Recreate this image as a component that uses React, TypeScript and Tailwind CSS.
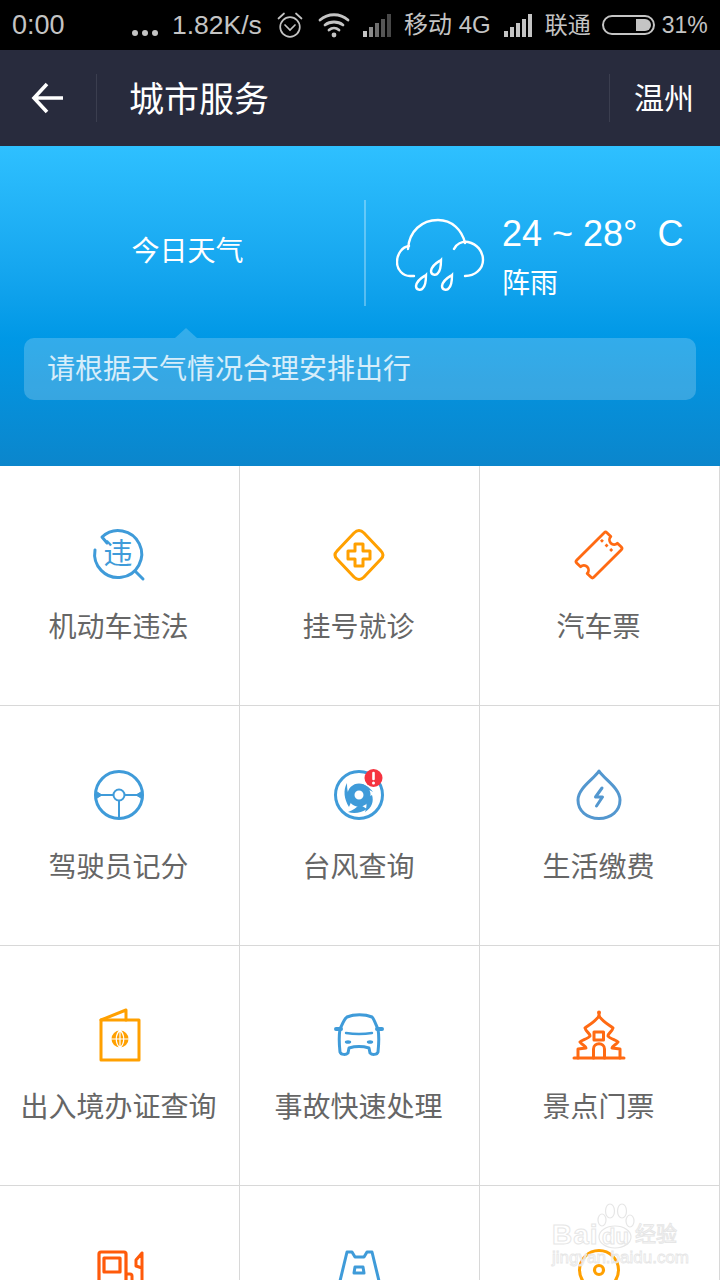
import type { ReactNode } from 'react'

const BLUE = '#3f9bd9'
const AMBER = '#ffa000'
const ORANGE = '#ff6a13'

function IconBox({ children, color }: { children: ReactNode; color: string }) {
  return (
    <svg viewBox="0 0 60 60" className="w-[60px] h-[60px] overflow-visible" fill="none" stroke={color} strokeWidth="3" strokeLinecap="round" strokeLinejoin="round">
      {children}
    </svg>
  )
}

const ViolationIcon = () => (
  <IconBox color={BLUE}>
    <path d="M6 25 A23.5 23.5 0 1 0 13 12 L18 18" />
    <path d="M47 47 L54 54" />
    <text x="29" y="39" textAnchor="middle" fontSize="29" fill={BLUE} stroke="none" fontFamily="'Noto Sans CJK SC', sans-serif">违</text>
  </IconBox>
)

const HospitalIcon = () => (
  <IconBox color={AMBER}>
    <path d="M25 8 Q30 3 35 8 L52 26 Q56 30 52 34 L35 52 Q30 57 25 52 L8 34 Q4 30 8 26 Z" />
    <path d="M26 19 H34 V26 H41 V34 H34 V41 H26 V34 H19 V26 H26 Z" />
  </IconBox>
)

const TicketIcon = () => (
  <IconBox color={ORANGE}>
    <g transform="translate(30 30) rotate(-45) scale(0.93)">
      <path d="M-21 -13 H21 a2 2 0 0 1 2 2 V-5 a5 5 0 0 0 0 10 V11 a2 2 0 0 1 -2 2 H-21 a2 2 0 0 1 -2 -2 V5 a5 5 0 0 0 0 -10 V-11 a2 2 0 0 1 2 -2 Z" />
      <path d="M13 -10 V11" strokeDasharray="3 4" strokeLinecap="butt" />
    </g>
  </IconBox>
)

const WheelIcon = () => (
  <IconBox color={BLUE}>
    <circle cx="30" cy="30" r="23.5" />
    <circle cx="30" cy="30" r="5.5" strokeWidth="2" />
    <path d="M24 30 H7 M36 30 H53 M30 36 V53" strokeWidth="2" />
    <path d="M6.5 26 L13 30 L6.5 34 Z M53.5 26 L47 30 L53.5 34 Z" fill={BLUE} strokeWidth="1" />
  </IconBox>
)

const TyphoonIcon = () => (
  <IconBox color={BLUE}>
    <circle cx="30" cy="30" r="23.5" />
    <circle cx="30" cy="30" r="8" strokeWidth="7" />
    <g fill={BLUE} stroke="none">
      <path d="M20 26 C25 17 36 16 44 27 C38 23 30 22 26 26 Z" />
      <path d="M43 30 C45 36 43 43 36 47 C38 42 38 38 36 34 Z" />
      <path d="M38 44 C32 48 25 49 19 47 C24 45 28 43 30 39 Z" />
      <path d="M20 42 C15 34 14 25 18 18 C18 25 19 30 23 35 Z" />
    </g>
    <circle cx="44.5" cy="13" r="9" fill="#f5333f" stroke="none" />
    <path d="M44.5 8 V14" stroke="#fff" strokeWidth="2.6" />
    <circle cx="44.5" cy="18" r="1.5" fill="#fff" stroke="none" />
  </IconBox>
)

const DropIcon = () => (
  <IconBox color="#5397cf">
    <path d="M30 6 C25 14 9 23 9 35 C9 46 18 53.5 30 53.5 C42 53.5 51 46 51 35 C51 23 35 14 30 6 Z" />
    <path d="M33 23 L26.5 32 H33.5 L27.5 41" />
  </IconBox>
)

const PassportIcon = () => (
  <IconBox color={AMBER}>
    <path d="M12 15 H50 V55 H12 Z" />
    <path d="M12 15 L37 5 V15" />
    <circle cx="31" cy="34" r="8.5" fill={AMBER} stroke="none" />
    <path d="M22 34 H40 M31 25 V43 M31 25 C26 30 26 38 31 43 M31 25 C36 30 36 38 31 43" stroke="#fff" strokeWidth="1.2" />
  </IconBox>
)

const CarIcon = () => (
  <IconBox color={BLUE}>
    <path d="M18 12 C25 9 36 9 43 12 C45 14 47 20 49 24 C50 30 50 38 49 47 C48 50 43 50 41 48 L40 43 C33 41 27 41 20 43 L19 48 C17 50 12 50 11 47 C10 38 10 30 11 24 C13 20 15 14 18 12 Z" />
    <path d="M7 24 H12 M48 24 H53" strokeWidth="4" />
    <path d="M17 28 C24 29 36 29 43 28" strokeWidth="2.4" />
    <ellipse cx="19" cy="37" rx="3.2" ry="1.8" fill={BLUE} stroke="none" />
    <ellipse cx="41" cy="37" rx="3.2" ry="1.8" fill={BLUE} stroke="none" />
  </IconBox>
)

const PagodaIcon = () => (
  <IconBox color={ORANGE}>
    <circle cx="30" cy="7.5" r="2" fill={ORANGE} stroke="none" />
    <path d="M30 9 V11 C26 17 20 20 16 23 C17 27 21 28 21 31 C19 34 12 35 11 37 C13 40 17 41 17 43 L9 44 V53" />
    <path d="M30 11 C34 17 40 20 44 23 C43 27 39 28 39 31 C41 34 48 35 49 37 C47 40 43 41 43 43 L51 44 V53" />
    <path d="M25 27 H34.5 V35 H25 Z" />
    <path d="M24.5 53 V44 C24.5 37 35.5 37 35.5 44 V53" />
    <path d="M5 53 H55" />
  </IconBox>
)

const PumpIcon = () => (
  <IconBox color="#ff5a0a">
    <path d="M10 60 V9 a2 2 0 0 1 2 -2 H35 a2 2 0 0 1 2 2 V60" strokeWidth="3.2" />
    <path d="M15 13 H31 V27 H15 Z" strokeWidth="3.2" />
    <path d="M38 29 H41 a2 2 0 0 1 2 2 V40 M53 8 V40 M53 8 L47 15 V21 L53 23" />
  </IconBox>
)

const RoadIcon = () => (
  <IconBox color={BLUE}>
    <path d="M11 36 L18 7 H23 L26 12 H35 L38 7 H43 L50 36" />
    <path d="M26 22 H34 L35 28 H25 Z" />
  </IconBox>
)

const DiscIcon = () => (
  <IconBox color={AMBER}>
    <circle cx="30" cy="25" r="19.5" />
    <circle cx="30" cy="25" r="4.5" strokeWidth="3.2" />
  </IconBox>
)

// last row is cut off by the window before its labels start
const services: { label?: string; icon: ReactNode }[] = [
  { label: '机动车违法', icon: <ViolationIcon /> },
  { label: '挂号就诊', icon: <HospitalIcon /> },
  { label: '汽车票', icon: <TicketIcon /> },
  { label: '驾驶员记分', icon: <WheelIcon /> },
  { label: '台风查询', icon: <TyphoonIcon /> },
  { label: '生活缴费', icon: <DropIcon /> },
  { label: '出入境办证查询', icon: <PassportIcon /> },
  { label: '事故快速处理', icon: <CarIcon /> },
  { label: '景点门票', icon: <PagodaIcon /> },
  { icon: <PumpIcon /> },
  { icon: <RoadIcon /> },
  { icon: <DiscIcon /> },
]

function SignalBars({ dim }: { dim?: boolean }) {
  const heights = [6, 10, 14, 18, 23]
  const tones = dim
    ? ['bg-[#c4c4c4]', 'bg-[#8c8c8c]', 'bg-[#6e6e6e]', 'bg-[#565656]', 'bg-[#484848]']
    : ['bg-[#c4c4c4]', 'bg-[#c4c4c4]', 'bg-[#c4c4c4]', 'bg-[#c4c4c4]', 'bg-[#c4c4c4]']
  return (
    <div className="flex items-end gap-[2px] h-[23px]">
      {heights.map((h, i) => (
        <div key={h} className={`w-[4px] ${tones[i]}`} style={{ height: h }} />
      ))}
    </div>
  )
}

function StatusBar() {
  return (
    <div className="h-[50px] bg-black text-[#c4c4c4] flex items-center">
      <span className="ml-[12px] text-[27px] leading-none w-[120px]">0:00</span>
      <div className="flex gap-[4px] mt-[16px]">
        <i className="w-[6px] h-[6px] rounded-full bg-[#c4c4c4]" />
        <i className="w-[6px] h-[6px] rounded-full bg-[#c4c4c4]" />
        <i className="w-[6px] h-[6px] rounded-full bg-[#c4c4c4]" />
      </div>
      <span className="ml-[14px] w-[91px] text-[26.5px] leading-none whitespace-nowrap">1.82K/s</span>
      <svg viewBox="0 0 26 26" className="ml-[14px] w-[26px] h-[26px]" fill="none" stroke="#c4c4c4" strokeWidth="1.7" strokeLinecap="round">
        <circle cx="13" cy="15" r="9.8" />
        <path d="M8 13 L13 18 L18 13 M1.5 6.5 L7 1.5 M24.5 6.5 L19 1.5" />
      </svg>
      <svg viewBox="0 0 32 26" className="ml-[15px] w-[32px] h-[26px]" fill="none" stroke="#c4c4c4" strokeWidth="2.8" strokeLinecap="round">
        <path d="M2 8 C10 1 22 1 30 8 M7 13 C12 9 20 9 25 13 M11 18 C14 15.5 18 15.5 21 18" />
        <circle cx="16" cy="23" r="2.4" fill="#c4c4c4" stroke="none" />
      </svg>
      <div className="ml-[13px]"><SignalBars dim /></div>
      <span className="ml-[13px] text-[24px] leading-none whitespace-nowrap">移动 4G</span>
      <div className="ml-[13px]"><SignalBars /></div>
      <span className="ml-[13px] text-[23px] leading-none">联通</span>
      <div className="ml-[11px] w-[53px] h-[20px] rounded-full border-2 border-[#c4c4c4] flex justify-end items-center pr-[2px]">
        <div className="w-[15px] h-[12px] rounded-r-full bg-[#c4c4c4]" />
      </div>
      <span className="ml-[7px] text-[23px] leading-none">31%</span>
    </div>
  )
}

function NavBar() {
  return (
    <div className="h-[96px] bg-[#282b3d] flex items-center text-white">
      <div className="w-[96px] h-[48px] flex items-center justify-center border-r border-[#3b3e4f] box-content">
        <svg viewBox="0 0 36 36" className="w-[36px] h-[36px] -ml-[1px]" fill="none" stroke="#fff" strokeWidth="3.6">
          <path d="M33 18 H5 M17 4 L4 18 L17 32" />
        </svg>
      </div>
      <span className="ml-[32px] mt-[2px] text-[35px] leading-none">城市服务</span>
      <div className="ml-auto w-[111px] h-[48px] border-l border-[#3b3e4f] flex items-center pl-[24px]">
        <span className="mt-[2px] text-[30px] leading-none">温州</span>
      </div>
    </div>
  )
}

function WeatherCard() {
  return (
    <div className="h-[320px] bg-gradient-to-b from-[#2ec0ff] via-[#0098e6] via-60% to-[#0b86cc] text-white pt-[54px]">
      <div className="flex h-[106px]">
        <div className="w-[364px] border-r-2 border-white/30 box-content flex items-center justify-center">
          <span className="text-[28px] leading-none mr-[-11px] mb-[2px]">今日天气</span>
        </div>
        <svg viewBox="0 0 90 76" className="ml-[30px] mt-[18px] w-[90px] h-[76px]" fill="none" stroke="#fff" strokeWidth="2.4" strokeLinecap="round">
          <path d="M12 31 C13 13 26 2 42 2 C56 2 66 12 69 25" />
          <path d="M58 31 C60 26 66 23 72 24 C81 26 87 33 87 42 C87 51 79 58 69 58" />
          <path d="M13 28 C6 29 1 36 1 44 C1 52 7 58 14 58 H18" />
          <path d="M45 42 C44 43 36 46 35 53 C35 57 40 58 42 55 C45 52 45 45 45 42 Z" />
          <path transform="translate(-15 15)" d="M45 42 C44 43 36 46 35 53 C35 57 40 58 42 55 C45 52 45 45 45 42 Z" />
          <path transform="translate(11 15)" d="M45 42 C44 43 36 46 35 53 C35 57 40 58 42 55 C45 52 45 45 45 42 Z" />
        </svg>
        <div className="ml-[16px] flex flex-col">
          <span className="text-[36px] leading-none mt-[16px] whitespace-pre">24 ~ 28°  C</span>
          <span className="text-[28px] leading-none mt-[18px]">阵雨</span>
        </div>
      </div>
      <div className="relative mt-[32px] mx-[24px] h-[62px] rounded-[10px] bg-white/20 flex items-center pl-[23px]">
        <div className="absolute left-[151px] -top-[10px] w-0 h-0 border-x-[11px] border-x-transparent border-b-[10px] border-b-white/20" />
        <span className="mt-[2px] text-[28px] leading-none text-white/80">请根据天气情况合理安排出行</span>
      </div>
    </div>
  )
}

function Watermark() {
  return (
    <div className="absolute left-[552px] top-[1202px] w-[130px] h-[66px] font-['Liberation_Sans',sans-serif] pointer-events-none">
      <svg viewBox="0 0 130 66" className="absolute left-0 top-0 w-[130px] h-[66px]" fill="rgba(255,255,255,0.6)" stroke="#e6e6e6" strokeWidth="1.2">
        <ellipse cx="50" cy="18" rx="4" ry="6" />
        <ellipse cx="58" cy="9" rx="4.5" ry="7" />
        <ellipse cx="70" cy="9" rx="4.5" ry="7" />
        <ellipse cx="78" cy="19" rx="4" ry="6" />
        <ellipse cx="63" cy="35" rx="16" ry="11" />
      </svg>
      <div className="absolute left-0 top-[19px] whitespace-nowrap text-[28px] leading-none font-bold tracking-[1px] text-white/60 [-webkit-text-stroke:1px_#e6e6e6]">
        Bai
      </div>
      <div className="absolute left-[50px] top-[24px] whitespace-nowrap text-[22px] leading-none font-bold text-white/60 [-webkit-text-stroke:1px_#e6e6e6]">
        du
      </div>
      <div className="absolute left-[83px] top-[20px] whitespace-nowrap text-[21px] leading-none font-['Noto_Sans_CJK_SC',sans-serif] text-white/60 [-webkit-text-stroke:1px_#e6e6e6]">
        经验
      </div>
      <div className="absolute left-0 top-[47px] whitespace-nowrap text-[17px] leading-none text-white/70 [-webkit-text-stroke:0.8px_#e6e6e6]">
        jingyan.baidu.com
      </div>
    </div>
  )
}

export default function App() {
  return (
    <div className="relative w-[720px] h-[1280px] overflow-hidden bg-white font-['Liberation_Sans','Noto_Sans_CJK_SC',sans-serif]">
      <StatusBar />
      <NavBar />
      <WeatherCard />
      <div className="grid grid-cols-3">
        {services.map((item, i) => (
          <div key={i} className="h-[240px] border-r border-b border-[#d8d8d8] flex flex-col items-center pt-[59px] pr-[2px]">
            {item.icon}
            {item.label && (
              <span className="mt-[23px] text-[28px] leading-[40px] text-[#666] whitespace-nowrap">{item.label}</span>
            )}
          </div>
        ))}
      </div>
      <Watermark />
    </div>
  )
}
